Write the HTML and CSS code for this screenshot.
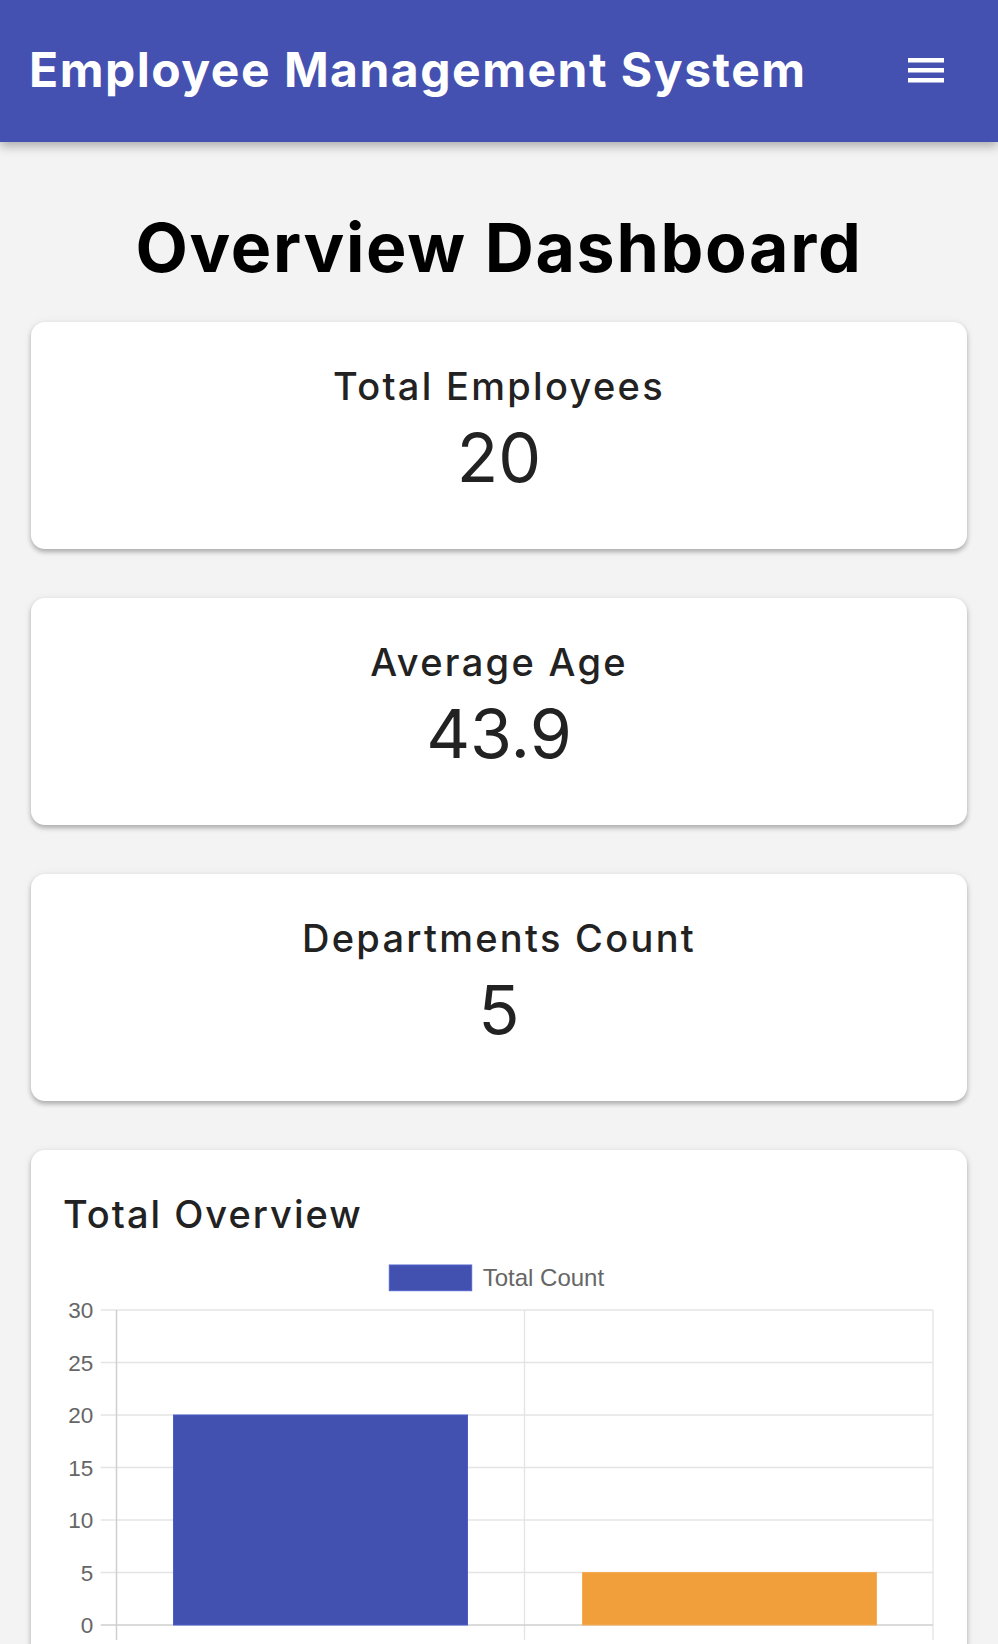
FILE: index.html
```html
<!DOCTYPE html>
<html lang="en">
<head>
<meta charset="utf-8">
<title>Employee Management System</title>
<link rel="stylesheet" href="styles.css">
</head>
<body>
<header class="topbar">
  <div class="brand">Employee Management System</div>
  <button class="menu-btn" aria-label="Menu">
    <svg class="menu-icon" width="36" height="25" viewBox="0 0 36 25">
      <rect x="0" y="0" width="36" height="4.5" fill="#fff"/>
      <rect x="0" y="10" width="36" height="4.5" fill="#fff"/>
      <rect x="0" y="20" width="36" height="4.5" fill="#fff"/>
    </svg>
  </button>
</header>
<main class="content">
  <h1 class="page-title">Overview Dashboard</h1>
  <section class="stat-card">
    <h2 class="stat-label">Total Employees</h2>
    <div class="stat-value">20</div>
  </section>
  <section class="stat-card">
    <h2 class="stat-label">Average Age</h2>
    <div class="stat-value">43.9</div>
  </section>
  <section class="stat-card">
    <h2 class="stat-label">Departments Count</h2>
    <div class="stat-value">5</div>
  </section>
  <section class="chart-card">
    <h2 class="chart-title">Total Overview</h2>
    <svg class="chart" viewBox="0 0 872 450" width="872" height="450">
      <rect x="326.3" y="32" width="82.4" height="25.7" fill="#4251af" stroke="#5163cc" stroke-width="1"/>
      <text class="legend-text" x="419.7" y="52.7">Total Count</text>
      <g class="grid">
        <line x1="37.7" y1="77" x2="870" y2="77"/>
        <line x1="37.7" y1="129.5" x2="870" y2="129.5"/>
        <line x1="37.7" y1="182" x2="870" y2="182"/>
        <line x1="37.7" y1="234.5" x2="870" y2="234.5"/>
        <line x1="37.7" y1="287" x2="870" y2="287"/>
        <line x1="37.7" y1="339.5" x2="870" y2="339.5"/>
        <line x1="461.5" y1="77" x2="461.5" y2="407"/>
        <line x1="870" y1="77" x2="870" y2="407"/>
      </g>
      <g class="axis">
        <line x1="53.5" y1="77" x2="53.5" y2="407"/>
        <line x1="37.7" y1="392" x2="870" y2="392"/>
      </g>
      <g class="tick-labels">
        <text x="30.3" y="85">30</text>
        <text x="30.3" y="137.5">25</text>
        <text x="30.3" y="190">20</text>
        <text x="30.3" y="242.5">15</text>
        <text x="30.3" y="295">10</text>
        <text x="30.3" y="347.5">5</text>
        <text x="30.3" y="400">0</text>
      </g>
      <rect x="110.5" y="182" width="294" height="210" fill="#4251af" stroke="#4b5dc9" stroke-width="1"/>
      <rect x="519.5" y="339.5" width="294" height="52.5" fill="#f09f3a" stroke="#f5ad55" stroke-width="1"/>
    </svg>
  </section>
</main>
</body>
</html>
```
FILE: styles.css
```css
* {
  box-sizing: border-box;
}

body {
  margin: 0;
  background: #f3f3f3;
  font-family: Inter, "Open Sans", "Liberation Sans", sans-serif;
  color: #222;
}

.topbar {
  height: 142px;
  background: #4451b1;
  display: flex;
  align-items: center;
  justify-content: space-between;
  padding: 0 54px 0 29px;
  box-shadow: 0 4px 10px rgba(0, 0, 0, 0.3);
  position: relative;
  z-index: 1;
}

.brand {
  color: #fff;
  font-size: 48px;
  line-height: 48px;
  font-weight: 700;
  letter-spacing: 1.5px;
  margin-bottom: 3px;
}

.menu-btn {
  background: none;
  border: 0;
  padding: 0;
  margin: 0 0 2px 0;
  display: flex;
}

.menu-icon {
  display: block;
}

.content {
  padding: 0 31px 40px;
}

.page-title {
  margin: 71px 0 41px;
  font-size: 68px;
  line-height: 68px;
  font-weight: 700;
  letter-spacing: 1.7px;
  color: #000;
  text-align: center;
}

.stat-card {
  background: #fff;
  border-radius: 14px;
  height: 227px;
  padding: 45px 20px 0;
  margin-bottom: 49px;
  text-align: center;
  box-shadow: 0 3px 5px rgba(0, 0, 0, 0.28), 0 0 10px rgba(0, 0, 0, 0.05);
}

.stat-label {
  margin: 0;
  font-size: 38px;
  line-height: 38px;
  font-weight: 500;
  letter-spacing: 2.3px;
  color: #222;
}

.stat-value {
  margin-top: 18px;
  font-size: 68px;
  line-height: 68px;
  font-weight: 400;
  color: #222;
}

.chart-card {
  background: #fff;
  border-radius: 14px;
  padding: 45px 32px 30px;
  box-shadow: 0 3px 5px rgba(0, 0, 0, 0.28), 0 0 10px rgba(0, 0, 0, 0.05);
}

.chart-title {
  margin: 0;
  font-size: 38px;
  line-height: 38px;
  font-weight: 500;
  letter-spacing: 2px;
  color: #222;
}

.chart {
  display: block;
  width: 872px;
  height: 450px;
  margin-top: 0;
  font-family: "Liberation Sans", Arial, sans-serif;
}

.legend-text {
  font-size: 24px;
  fill: #666;
}

.grid line {
  stroke: #e4e4e4;
  stroke-width: 1.3;
}

.axis line {
  stroke: #cfcfcf;
  stroke-width: 1.5;
}

.tick-labels text {
  font-size: 22.5px;
  fill: #666;
  text-anchor: end;
}
```
